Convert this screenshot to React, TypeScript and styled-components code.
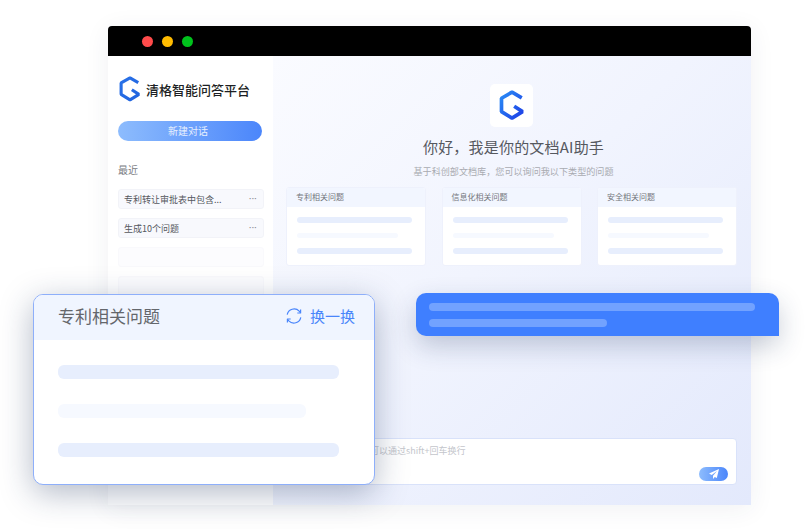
import styled, { createGlobalStyle } from "styled-components";

const GlobalStyle = createGlobalStyle`
  html, body {
    margin: 0;
    background: #fff;
  }
  * {
    box-sizing: border-box;
  }
`;

const Page = styled.div`
  position: relative;
  width: 811px;
  height: 531px;
  padding: 26px 60px 26px 108px;
  overflow: hidden;
  font-family: "Noto Sans CJK SC", "Noto Sans", sans-serif;
`;
const Window = styled.div`
  display: flex;
  flex-direction: column;
  height: 479px;
  border-radius: 4px 4px 0 0;
  overflow: hidden;
  box-shadow: 0 4px 26px rgba(40, 50, 80, 0.07);
`;
const TitleBar = styled.div`
  display: flex;
  align-items: center;
  gap: 9px;
  flex: 0 0 30px;
  padding: 0 0 0 34px;
  background: #000;
`;
const Light = styled.span<{ $color: string }>`
  width: 11px;
  height: 11px;
  border-radius: 50%;
  background: ${(p) => p.$color};
`;
const Body = styled.div`
  display: flex;
  flex: 1;
  min-height: 0;
`;
const Sidebar = styled.aside`
  flex: 0 0 165px;
  padding: 20px 9px 0 10px;
  background: #fff;
  overflow: hidden;
`;
const Brand = styled.div`
  display: flex;
  align-items: center;
  gap: 5px;
  height: 26px;
  padding-left: 1px;
  font-size: 13px;
  font-weight: 500;
  color: #1d1f24;
`;
const NewChat = styled.div`
  display: flex;
  align-items: center;
  justify-content: center;
  width: 144px;
  height: 20px;
  margin-top: 19px;
  padding: 0 4px 1px 0;
  border-radius: 10px;
  font-size: 10px;
  color: #e6effe;
  background: linear-gradient(90deg, #8dbcfd, #4b86fb);
`;
const Recent = styled.div`
  margin-top: 22px;
  font-size: 10px;
  line-height: 14px;
  color: #777a80;
`;
const History = styled.div`
  display: flex;
  flex-direction: column;
  gap: 9px;
  margin-top: 12px;
`;
const HistoryItem = styled.div<{ $empty?: boolean }>`
  display: flex;
  align-items: center;
  justify-content: space-between;
  flex: 0 0 20px;
  padding: 0 6px 0 5px;
  border: 1px solid ${(p) => (p.$empty ? "#f9f9fc" : "#f2f3f8")};
  border-radius: 3px;
  font-size: 9px;
  color: #55585e;
  background: ${(p) => (p.$empty ? "#fcfcfe" : "#f8f9fd")};
`;
const Dots = styled.span`
  font-family: "Liberation Sans", sans-serif;
  font-size: 8px;
  font-weight: 700;
  line-height: 8px;
  color: #8b8e96;
`;
const Main = styled.main`
  display: flex;
  flex: 1;
  flex-direction: column;
  align-items: center;
  padding: 28px 14px 20px 13px;
  background: linear-gradient(135deg, #fafbff 0%, #f1f4fe 45%, #e3e9fc 100%);
`;
const LogoTile = styled.div`
  display: flex;
  align-items: center;
  justify-content: center;
  width: 43px;
  height: 43px;
  border-radius: 5px;
  background: #fff;
`;
const Heading = styled.h1`
  margin: 10px 0 0 4px;
  font-size: 15px;
  font-weight: 400;
  letter-spacing: 0.2px;
  line-height: 20px;
  color: #55585e;
`;
const Subheading = styled.p`
  margin: 7px 0 0 4px;
  font-size: 9.1px;
  line-height: 14px;
  color: #a9abb1;
`;
const Cards = styled.div`
  display: grid;
  grid-template-columns: repeat(3, 140px);
  gap: 15.5px;
  width: 100%;
  margin-top: 9px;
`;
const Card = styled.div`
  height: 79px;
  border: 1px solid #eef1fc;
  border-radius: 3px;
  background: #fff;
  overflow: hidden;
`;
const CardHead = styled.div`
  height: 19px;
  padding-left: 9px;
  font-size: 8px;
  line-height: 17px;
  color: #74777d;
  background: #f2f6ff;
`;
const CardBody = styled.div`
  display: flex;
  flex-direction: column;
  gap: 10px;
  padding: 10px 0 0 10px;
`;
const Bar = styled.div<{ $w: number; $light?: boolean }>`
  width: ${(p) => p.$w}px;
  height: 5.5px;
  border-radius: 3px;
  background: ${(p) => (p.$light ? "#f6f9ff" : "#e7eefd")};
`;
const InputBox = styled.div`
  display: flex;
  flex-direction: column;
  justify-content: space-between;
  width: 100%;
  height: 47px;
  margin-top: auto;
  padding: 5px 8px 3px 74px;
  border: 1px solid #d9e2fa;
  border-radius: 4px;
  font-size: 9px;
  line-height: 13px;
  color: #c4c6cc;
  background: #fff;
`;
const SendButton = styled.div`
  display: flex;
  align-items: center;
  justify-content: center;
  align-self: flex-end;
  width: 29px;
  height: 14px;
  border-radius: 7px;
  background: linear-gradient(90deg, #8dbcfd, #4b86fb);
`;
const QuestionPopup = styled.section`
  position: absolute;
  left: 33px;
  top: 294px;
  width: 342px;
  height: 191px;
  border: 1.5px solid #8eaffa;
  border-radius: 10px;
  background: #fff;
  overflow: hidden;
  box-shadow: 0 8px 32px rgba(30, 50, 90, 0.34);
`;
const PopupHead = styled.div`
  display: flex;
  align-items: center;
  justify-content: space-between;
  height: 45px;
  padding: 0 19px 4px 24px;
  font-size: 17px;
  color: #64676c;
  background: #f0f5ff;
`;
const Swap = styled.div`
  display: flex;
  align-items: center;
  gap: 8px;
  font-size: 15px;
  color: #4a86fb;
`;
const PopupBody = styled.div`
  display: flex;
  flex-direction: column;
  gap: 25px;
  padding: 25px 0 0 24px;
`;
const PopupBar = styled(Bar)`
  height: 14px;
  border-radius: 6px;
`;
const Bubble = styled.div`
  position: absolute;
  left: 416px;
  top: 293px;
  display: flex;
  flex-direction: column;
  gap: 8px;
  width: 363px;
  height: 43px;
  padding: 10px 0 0 13px;
  border-radius: 10px 10px 0 10px;
  background: #3f7fff;
  box-shadow: 0 10px 26px rgba(30, 50, 90, 0.24);
`;
const BubbleBar = styled.div<{ $w: number }>`
  width: ${(p) => p.$w}px;
  height: 8px;
  border-radius: 4px;
  background: #72a2ff;
`;

function Logo({ size, gradient }: { size: number; gradient?: boolean }) {
  const id = gradient ? "logoMain" : "logoSide";
  return (
    <svg width={size} height={(size * 28) / 24} viewBox="9 6 24 28" fill="none">
      <defs>
        <linearGradient id={id} x1="0" y1="0" x2="1" y2="1">
          <stop offset="0" stopColor={gradient ? "#2a8cf5" : "#2a72e8"} />
          <stop offset="1" stopColor={gradient ? "#1d3ee6" : "#1f62de"} />
        </linearGradient>
      </defs>
      <path
        d="M30 13.2 21 8 11.3 13.6V26L21 32l9.7-6L23 21"
        stroke={`url(#${id})`}
        strokeWidth="3.4"
        strokeLinejoin="bevel"
      />
    </svg>
  );
}

function RefreshIcon() {
  return (
    <svg width="16" height="16" viewBox="0 0 16 16" fill="none" stroke="#4a86fb" strokeWidth="1.2">
      <path d="M1.2 6.6A7 7 0 0 1 13.2 3.2L14 4.4" />
      <path d="M14.6 1.6V5H11.3" strokeLinejoin="round" />
      <path d="M14.8 9.4A7 7 0 0 1 2.8 12.8L2 11.6" />
      <path d="M1.4 14.4V11H4.7" strokeLinejoin="round" />
    </svg>
  );
}

function SendIcon() {
  return (
    <svg width="10" height="10" viewBox="0 0 10 10" fill="#fff">
      <path d="M10 0 0 4.6l2.7 1.3L8 2 4 6.8V10l1.8-2 2 1z" />
    </svg>
  );
}

const cards = ["专利相关问题", "信息化相关问题", "安全相关问题"];

export default function App() {
  return (
    <Page>
      <GlobalStyle />
      <Window>
        <TitleBar>
          <Light $color="#ff4b4b" />
          <Light $color="#ffbb00" />
          <Light $color="#00c21c" />
        </TitleBar>
        <Body>
          <Sidebar>
            <Brand>
              <Logo size={22} />
              清格智能问答平台
            </Brand>
            <NewChat>新建对话</NewChat>
            <Recent>最近</Recent>
            <History>
              <HistoryItem>
                专利转让审批表中包含...
                <Dots>···</Dots>
              </HistoryItem>
              <HistoryItem>
                生成10个问题
                <Dots>···</Dots>
              </HistoryItem>
              <HistoryItem $empty />
              <HistoryItem $empty />
            </History>
          </Sidebar>
          <Main>
            <LogoTile>
              <Logo size={26} gradient />
            </LogoTile>
            <Heading>你好，我是你的文档AI助手</Heading>
            <Subheading>基于科创部文档库，您可以询问我以下类型的问题</Subheading>
            <Cards>
              {cards.map((title) => (
                <Card key={title}>
                  <CardHead>{title}</CardHead>
                  <CardBody>
                    <Bar $w={115} />
                    <Bar $w={101} $light />
                    <Bar $w={115} />
                  </CardBody>
                </Card>
              ))}
            </Cards>
            <InputBox>
              您可以通过shift+回车换行
              <SendButton>
                <SendIcon />
              </SendButton>
            </InputBox>
          </Main>
        </Body>
      </Window>
      <QuestionPopup>
        <PopupHead>
          专利相关问题
          <Swap>
            <RefreshIcon />
            换一换
          </Swap>
        </PopupHead>
        <PopupBody>
          <PopupBar $w={281} />
          <PopupBar $w={248} $light />
          <PopupBar $w={281} />
        </PopupBody>
      </QuestionPopup>
      <Bubble>
        <BubbleBar $w={326} />
        <BubbleBar $w={178} />
      </Bubble>
    </Page>
  );
}
